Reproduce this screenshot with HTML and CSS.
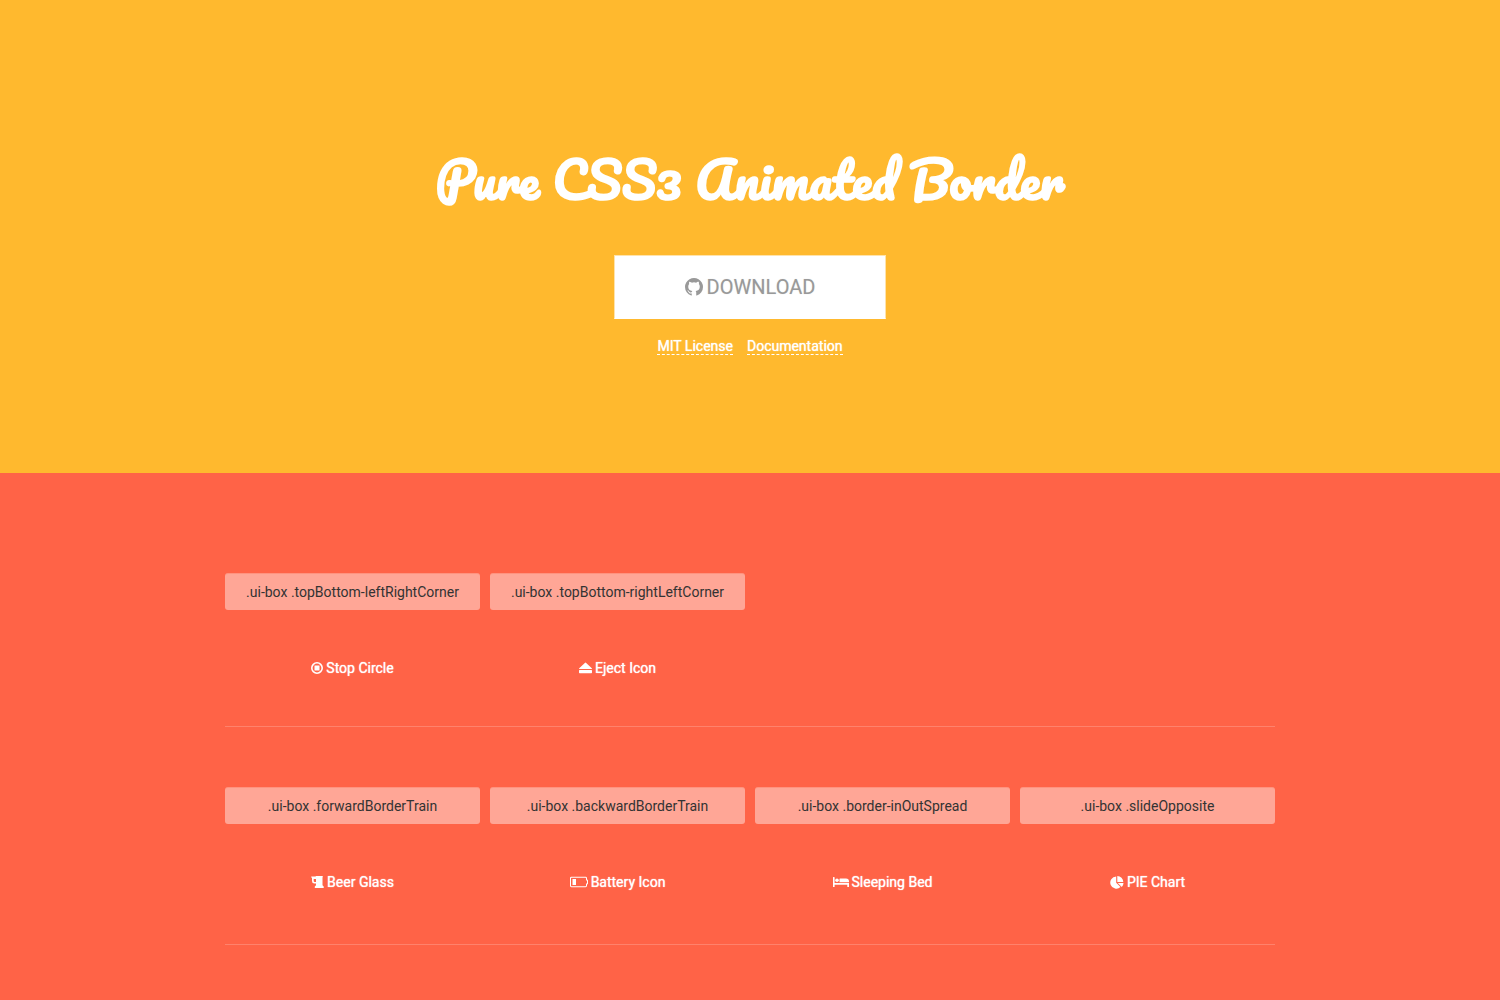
FILE: index.html
```html
<!DOCTYPE html>
<html lang="en">
<head>
<meta charset="utf-8">
<meta name="viewport" content="width=device-width, initial-scale=1">
<title>Pure CSS3 Animated Border</title>
<link rel="stylesheet" href="styles.css">
</head>
<body>
<header class="hero">
  <h1 class="title">Pure CSS3 Animated Border</h1>
  <a class="download" href="#download">
    <svg class="icon-github" viewBox="128 128 1536 1536" aria-hidden="true"><path d="M896 128q209 0 385.5 103t279.5 279.5 103 385.5q0 251-146.5 451.5t-378.5 277.5q-27 5-40-7t-13-30q0-3 .5-76.5t.5-134.5q0-97-52-142 57-6 102.5-18t94-39 81-66.5 53-105 20.5-150.5q0-119-79-206 37-91-8-204-28-9-81 11t-92 44l-38 24q-93-26-192-26t-192 26q-16-11-42.5-27t-83.5-38.5-85-13.5q-45 113-8 204-79 87-79 206 0 85 20.5 150t52.5 105 80.5 67 94 39 102.5 18q-39 36-49 103-21 10-45 15t-57 5-65.5-21.5-55.5-62.5q-19-32-48.5-52t-49.5-24l-20-3q-21 0-29 4.5t-5 11.5 9 14 13 12l7 5q22 10 43.5 38t31.5 51l10 23q13 38 44 61.5t67 30 69.5 7 55.5-3.5l23-4q0 38 .5 88.5t.5 54.5q0 18-13 30t-40 7q-232-77-378.5-277.5t-146.5-451.5q0-209 103-385.5t279.5-279.5 385.5-103z"/></svg>
    DOWNLOAD
  </a>
  <nav class="links">
    <a class="link" href="#license">MIT License</a>
    <a class="link" href="#documentation">Documentation</a>
  </nav>
</header>
<main class="demos">
  <section class="row">
    <article class="demo">
      <div class="label">.ui-box .topBottom-leftRightCorner</div>
      <div class="ui-box">
        <svg class="icon" width="12" height="12" viewBox="0 0 12 12" aria-hidden="true"><path fill-rule="evenodd" d="M6 0a6 6 0 1 1 0 12A6 6 0 0 1 6 0zM6 1.6a4.4 4.4 0 1 0 0 8.800 4.400 4.400 0 0 0 0-8.800z"/><rect x="3.500" y="3.500" width="5" height="5" rx=".3"/></svg>
        Stop Circle
      </div>
    </article>
    <article class="demo">
      <div class="label">.ui-box .topBottom-rightLeftCorner</div>
      <div class="ui-box">
        <svg class="icon" width="13" height="12" viewBox="0 0 13 12" aria-hidden="true"><path d="M.2 6.300 6.100.8q.4-.4.8 0l5.900 5.500q.4.6-.3.6h-12q-.7 0-.3-.6zM.6 8h11.800q.6 0 .6.6v2q0 .6-.6.6H.6q-.6 0-.6-.6v-2Q0 8 .6 8z"/></svg>
        Eject Icon
      </div>
    </article>
  </section>
  <section class="row">
    <article class="demo">
      <div class="label">.ui-box .forwardBorderTrain</div>
      <div class="ui-box">
        <svg class="icon" width="13" height="12" viewBox="0 0 13 12" aria-hidden="true"><path fill-rule="evenodd" d="M0 1l.5-.6h4L5 0h6.500l.4.8-.4.700v7.800l1.200 1.200V12H3.800v-1.500L5 9.200V7.500H3.400Q1 7.500 1 5V2L0 1zm2.700 2v2q0 1 1 1H5V3z"/></svg>
        Beer Glass
      </div>
    </article>
    <article class="demo">
      <div class="label">.ui-box .backwardBorderTrain</div>
      <div class="ui-box">
        <svg class="icon" width="18" height="12" viewBox="0 0 18 12" aria-hidden="true"><path fill-rule="evenodd" d="M1.400.8h14.200q1.400 0 1.400 1.400v1.200q1 0 1 1v3.200q0 1-1 1v1.200q0 1.400-1.400 1.400H1.400Q0 11.200 0 9.800V2.200Q0 .8 1.400.8zm0 1Q1 1.800 1 2.200v7.600q0 .4.400.4h14.200q.4 0 .4-.4V7.600h1V4.400h-1V2.200q0-.4-.4-.4z"/><path d="M2.500 3H6v6H2.500z"/></svg>
        Battery Icon
      </div>
    </article>
    <article class="demo">
      <div class="label">.ui-box .border-inOutSpread</div>
      <div class="ui-box">
        <svg class="icon" width="16" height="12" viewBox="0 0 16 12" aria-hidden="true"><path d="M0 1.500Q0 1 .5 1H1q.6 0 .6.500V7H16v4h-1.700V8.700H1.600V11H0z"/><circle cx="4" cy="4.300" r="1.800"/><path d="M6.500 3q0-.5.5-.5h6q3 0 3 3v.8h-9.500z"/></svg>
        Sleeping Bed
      </div>
    </article>
    <article class="demo">
      <div class="label">.ui-box .slideOpposite</div>
      <div class="ui-box">
        <svg class="icon" width="14" height="13" viewBox="0 0 14 13" aria-hidden="true"><path d="M6.200.5v6.300l4.300 4.300A6.100 6.100 0 1 1 6.200.5zM7.300 0a6 6 0 0 1 6 5.900h-6zM7.800 7h5.700q0 2.300-1.700 4z"/></svg>
        PIE Chart
      </div>
    </article>
  </section>
</main>
</body>
</html>
```
FILE: styles.css
```css
* {
  box-sizing: border-box;
}

body {
  margin: 0;
  background: #ff6347;
  color: #fff;
  font: 14px/20px Roboto, sans-serif;
}

.hero {
  display: flex;
  flex-direction: column;
  align-items: center;
  padding: 139px 20px 118px;
  background: #ffb92e;
}

.title {
  margin: 0 0 36px;
  font: bold 50px/80px Pacifico, cursive;
  text-align: center;
}

.download {
  display: flex;
  align-items: center;
  justify-content: center;
  gap: 4px;
  width: 272px;
  height: 64px;
  max-width: 100%;
  border: 1px solid #ffe3ab;
  border-bottom-color: #fff;
  background: #fff;
  background-clip: padding-box;
  color: #999;
  font-size: 20px;
  text-decoration: none;
  text-shadow: 0 0 1px rgba(153, 153, 153, 0.4);
}

.icon-github {
  width: 18px;
  height: 18px;
  fill: currentColor;
}

.links {
  display: flex;
  gap: 14px;
  margin-top: 18px;
}

.link {
  padding-top: 1px;
  border-bottom: 1px dashed #fff;
  color: #fff;
  line-height: 16px;
  text-decoration: none;
  text-shadow: 0 0 1px #fff;
}

.demos {
  max-width: 1090px;
  margin: 0 auto;
  padding: 40px 20px;
}

.row {
  display: grid;
  grid-template-columns: repeat(4, 1fr);
  gap: 10px;
  padding: 60px 0 40px;
  border-bottom: 1px solid #ff826c;
}

.row:last-child {
  padding-bottom: 44px;
}

.label {
  padding: 8px;
  border-top: 1px solid #ff937f;
  border-radius: 3px;
  background: #ffa696;
  color: #333;
  text-align: center;
}

.ui-box {
  display: flex;
  align-items: center;
  justify-content: center;
  gap: 3px;
  height: 36px;
  margin: 40px 0 0;
  text-shadow: 0 0 1px #fff;
}

.icon {
  fill: currentColor;
}

@media (max-width: 900px) {
  .row {
    grid-template-columns: repeat(2, 1fr);
  }
}
```
